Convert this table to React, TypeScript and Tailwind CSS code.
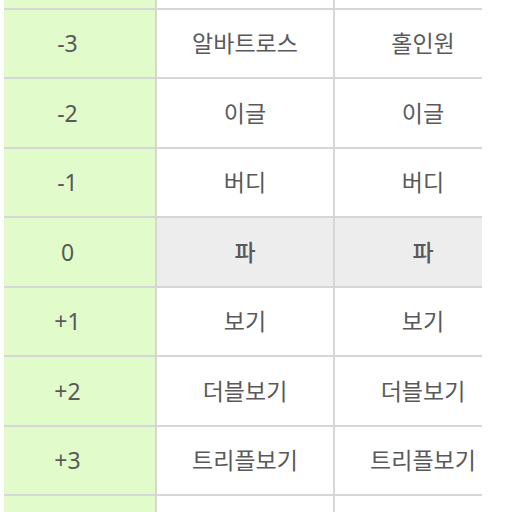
import React from 'react'

const rows = [
    { score: '', a: '', b: '' },
    { score: '-3', a: '알바트로스', b: '홀인원' },
    { score: '-2', a: '이글', b: '이글' },
    { score: '-1', a: '버디', b: '버디' },
    { score: '0', a: '파', b: '파', par: true },
    { score: '+1', a: '보기', b: '보기' },
    { score: '+2', a: '더블보기', b: '더블보기' },
    { score: '+3', a: '트리플보기', b: '트리플보기' },
    { score: '', a: '', b: '' },
]

const App = () => {
    return (
        <div
            className="w-[512px] h-[512px] overflow-hidden bg-white pl-[4px]"
            style={{ fontFamily: '"Noto Sans", "Noto Sans CJK KR", sans-serif' }}
        >
            <div className="w-[478px] h-full overflow-hidden">
                <div className="w-[511px] mt-[-59.4px]">
                    {rows.map((row, i) => (
                        <div key={i} className="flex h-[69.43px] border-b-2 border-[#d6d6d6] text-[23px] text-[#595959]">
                            <div className="w-[153px] shrink-0 flex items-center justify-center pr-[24px] bg-[#e2fbcb] border-r-2 border-[#d6d6d6]">
                                {row.score}
                            </div>
                            <div className={`w-[178px] shrink-0 flex items-center justify-center border-r-2 border-[#d6d6d6] ${row.par ? 'bg-[#eeedee] font-medium' : 'bg-white'}`}>
                                {row.a}
                            </div>
                            <div className={`w-[176px] shrink-0 flex items-center justify-center ${row.par ? 'bg-[#eeedee] font-medium' : 'bg-white'}`}>
                                {row.b}
                            </div>
                        </div>
                    ))}
                </div>
            </div>
        </div>
    )
}

export default App
